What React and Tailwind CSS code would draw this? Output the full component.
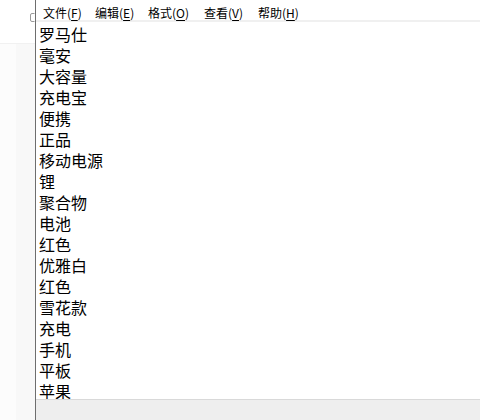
import React from "react";

const lines = ["罗马仕","毫安","大容量","充电宝","便携","正品","移动电源","锂","聚合物","电池","红色","优雅白","红色","雪花款","充电","手机","平板","苹果"];

const menus = [
  ["文件", "F", "w-[52px]"],
  ["编辑", "E", "w-[53px]"],
  ["格式", "O", "w-[56px]"],
  ["查看", "V", "w-[54px]"],
  ["帮助", "H", "w-[54px]"],
];

export default function App() {
  return (
    <div className="w-[480px] h-[420px] flex bg-white overflow-hidden text-black" style={{ fontFamily: '"Noto Sans CJK SC", "Noto Sans", sans-serif' }}>
      <div className="w-[36px] h-full flex flex-col border-r border-[#6e6e6e]">
        <div className="h-[43px] flex items-start pt-[13px] pl-[30px]">
          <svg width="5" height="9" viewBox="0 0 5 9"><path d="M4.5 0.5 H2 Q0.5 0.5 0.5 2 V7 Q0.5 8.5 2 8.5 H4.5" fill="none" stroke="#9a9a9a" strokeWidth="1" /></svg>
        </div>
        <div className="flex-1 flex border-t border-[#f1f1f1]">
          <div className="w-[16px] bg-[#fcfcfc]"></div>
          <div className="flex-1 bg-[#f8f8f8]"></div>
        </div>
      </div>
      <div className="flex-1 flex flex-col">
        <div className="h-[22px] flex items-center pl-[7px] text-[12px] border-b-2 border-[#f0f0f0]">
          {menus.map(([t, k, w]) => (
            <div key={k} className={`${w} leading-[16px] pt-[5px]`}>
              {t}(<span className="underline underline-offset-2">{k}</span>)
            </div>
          ))}
        </div>
        <div className="flex-1 overflow-hidden pl-[3px] pt-[2px] text-[16px] leading-[21px]">
          {lines.map((l, i) => (
            <div key={i} className="h-[21px]">{l}</div>
          ))}
        </div>
        <div className="h-[21px] border-t border-[#d9d9d9] bg-[#eeeeee]"></div>
      </div>
    </div>
  );
}
